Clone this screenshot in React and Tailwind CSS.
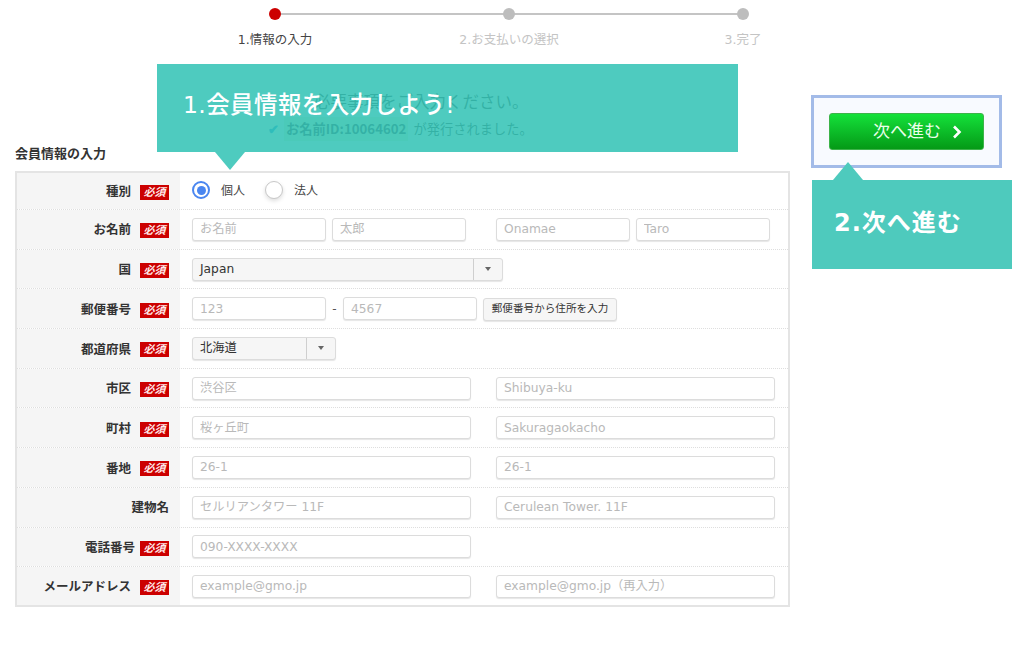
const FONT = 'font-["DejaVu_Sans","Noto_Sans_CJK_JP",sans-serif]';

function Req() {
  return (
    <span className="flex h-[15px] w-[29px] shrink-0 items-center justify-center bg-[#cc0000] text-[11px] italic leading-none text-[#ffe9e9]">
      必須
    </span>
  );
}

function Field({ w, ph }) {
  return (
    <input
      type="text"
      placeholder={ph}
      className={`${w} h-[23px] rounded-[3px] border border-[#dcdcdc] bg-white px-[7px] text-[12.25px] shadow-[0_1px_1px_#e6e6e6] outline-none placeholder:text-[#b9b9b9]`}
    />
  );
}

function Pick({ w, value }) {
  return (
    <div className={`${w} flex h-[23px] items-center rounded-[3px] border border-[#dcdcdc] bg-[#f6f6f6] text-[12.25px] text-[#333] shadow-[0_1px_1px_#e6e6e6]`}>
      <span className="flex-1 px-[7px]">{value}</span>
      <span className="flex h-full w-[29px] items-center justify-center border-l border-[#cfcfcf]">
        <span className="h-0 w-0 border-x-[3px] border-t-[4px] border-x-transparent border-t-[#666]" />
      </span>
    </div>
  );
}

function Row({ label, req = true, first, last, wideLabel, children }) {
  const h = first ? 'h-[37px]' : last ? 'h-[38px]' : 'h-[39.7px]';
  const edge = last ? '' : 'border-b border-dotted border-[#dedede]';
  let gap = 'mr-[9px]';
  if (wideLabel) gap = 'mr-[5px]';
  if (!req) gap = 'mr-0';
  return (
    <div className={`flex ${h} ${edge}`}>
      <div className="flex w-[163px] shrink-0 items-center justify-end bg-[#f5f5f5] pr-[11px] pt-[3px] text-[12.5px] font-bold text-[#333]">
        <span className={gap}>{label}</span>
        {req ? <Req /> : null}
      </div>
      <div className="flex flex-1 items-center pl-[12px]">{children}</div>
    </div>
  );
}

function Pair({ a, b }) {
  return (
    <div className="flex gap-[25px]">
      <Field w="w-[279px]" ph={a} />
      {b ? <Field w="w-[279px]" ph={b} /> : null}
    </div>
  );
}

function Radio({ on, label }) {
  return (
    <label className="flex items-center gap-[11px] text-[12px] text-[#444]">
      <span className={`-mt-[2px] flex h-[18px] w-[18px] items-center justify-center rounded-full bg-white ${on ? 'border-2 border-[#4a86f0]' : 'border border-[#c8c8c8] shadow-[0_2px_4px_#ddd]'}`}>
        {on ? <span className="h-[9px] w-[9px] rounded-full bg-[#4a86f0]" /> : null}
      </span>
      {label}
    </label>
  );
}

function Step({ label, active }) {
  return (
    <div className="flex w-[120px] flex-col items-center">
      <span className={`h-[12px] w-[12px] rounded-full ${active ? 'bg-[#cc0000]' : 'bg-[#bdbdbd]'}`} />
      <span className={`mt-[12px] text-[12.5px] leading-[16px] ${active ? 'text-[#444]' : 'text-[#c4c4c4]'}`}>{label}</span>
    </div>
  );
}

export default function App() {
  return (
    <div className={`relative h-[645px] w-[1024px] overflow-hidden bg-white ${FONT}`}>
      <div className="relative ml-[215px] flex w-[588px] justify-between pt-[8px]">
        <div className="absolute left-[60px] top-[13px] h-[2px] w-[468px] bg-[#c4c4c4]" />
        <div className="relative"><Step label="1.情報の入力" active /></div>
        <div className="relative"><Step label="2.お支払いの選択" /></div>
        <div className="relative"><Step label="3.完了" /></div>
      </div>

      <div className="flex">
        <div className="ml-[15px] w-[775px]">
          <div className="flex h-[96px] flex-col pt-[44px] text-[#555]">
            <p className="ml-[299px] text-[16.5px] leading-[22px]">必要事項をご入力ください。</p>
            <p className="ml-[253px] mt-[3px] flex items-center gap-[5px] font-['Noto_Sans_CJK_JP',sans-serif] text-[13.25px] leading-[24px]">
              <span className="font-bold text-[#2f9fe0]">✔</span>
              <span className="bg-[#e9f6d6] px-[2px] font-bold">お名前ID:10064602</span>
              <span>が発行されました。</span>
            </p>
          </div>
          <h2 className="h-[27px] text-[13px] font-bold leading-[20px] text-[#333]">会員情報の入力</h2>
          <div className="border-2 border-[#e4e4e4]">
            <Row label="種別" first>
              <div className="flex gap-[20px]">
                <Radio on label="個人" />
                <Radio label="法人" />
              </div>
            </Row>
            <Row label="お名前">
              <div className="flex gap-[6px]">
                <Field w="w-[134px]" ph="お名前" />
                <Field w="w-[134px]" ph="太郎" />
                <Field w="ml-[24px] w-[134px]" ph="Onamae" />
                <Field w="w-[134px]" ph="Taro" />
              </div>
            </Row>
            <Row label="国"><Pick w="w-[311px]" value="Japan" /></Row>
            <Row label="郵便番号">
              <div className="flex items-center">
                <Field w="w-[134px]" ph="123" />
                <span className="w-[17px] text-center text-[12px] text-[#555]">-</span>
                <Field w="w-[134px]" ph="4567" />
                <button className="ml-[6px] mt-[1px] h-[23px] w-[134px] rounded-[3px] border border-[#dcdcdc] bg-[#f6f6f6] text-[10.6px] text-[#333] shadow-[0_1px_1px_#e6e6e6]">郵便番号から住所を入力</button>
              </div>
            </Row>
            <Row label="都道府県"><Pick w="w-[144px]" value="北海道" /></Row>
            <Row label="市区"><Pair a="渋谷区" b="Shibuya-ku" /></Row>
            <Row label="町村"><Pair a="桜ヶ丘町" b="Sakuragaokacho" /></Row>
            <Row label="番地"><Pair a="26-1" b="26-1" /></Row>
            <Row label="建物名" req={false}><Pair a="セルリアンタワー 11F" b="Cerulean Tower. 11F" /></Row>
            <Row label="電話番号" wideLabel><Pair a="090-XXXX-XXXX" /></Row>
            <Row label="メールアドレス" last><Pair a="example@gmo.jp" b="example@gmo.jp（再入力）" /></Row>
          </div>
        </div>

        <div className="ml-[21px] mt-[47px]">
          <div className="flex h-[73px] w-[191px] items-center justify-center border-[3px] border-[#a3bbe8] bg-[#f8faff]">
            <button className="flex h-[37px] w-[155px] items-center justify-end gap-[10px] rounded-[3px] border border-[#3db34a] bg-gradient-to-b from-[#14e13a] to-[#059a16] pr-[20px] text-[17px] text-[#eaffea]">
              次へ進む
              <svg width="12" height="16" viewBox="0 0 12 16" fill="none" stroke="#fff" strokeWidth="2.6"><path d="M3 2.5l5.5 5.5-5.5 5.5" /></svg>
            </button>
          </div>
        </div>
      </div>

      <div className="absolute left-[157px] top-[64px] flex h-[88px] w-[581px] items-center bg-[#2fc2b4]/85 pb-[4px] pl-[26px] text-[23.5px] font-medium tracking-[0.4px] text-white">
        1.会員情報を入力しよう!
        <span className="absolute left-[58px] top-[88px] h-0 w-0 border-x-[15px] border-t-[18px] border-x-transparent border-t-[#4ecbbf]" />
      </div>
      <div className="absolute left-[812px] top-[180px] flex h-[89px] w-[200px] items-center bg-[#4ecabd] pb-[3px] pl-[22px] text-[24px] font-bold tracking-[1px] text-white">
        2.次へ進む
        <span className="absolute left-[21px] top-[-18px] h-0 w-0 border-x-[15px] border-b-[18px] border-x-transparent border-b-[#4ecabd]" />
      </div>
    </div>
  );
}
